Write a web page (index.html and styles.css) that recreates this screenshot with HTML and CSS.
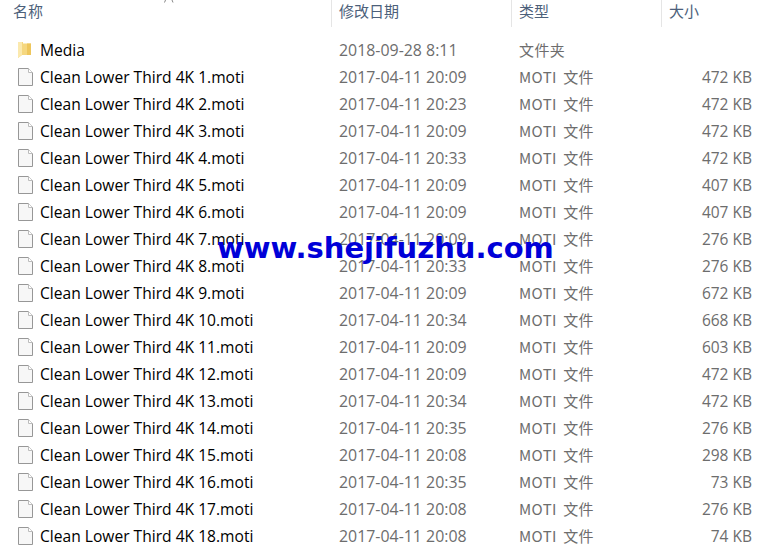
FILE: index.html
```html
<!DOCTYPE HTML>
<html>

<head>
  <meta charset="utf-8">
  <link rel="stylesheet" href="styles.css">
</head>

<body>

  <svg class="defs" width="0" height="0">
    <symbol id="file" viewBox="0 0 15 18">
      <path d="M.5 .5H10.5L14.5 4.5V17.5H.5Z" fill="#f7f7f7" stroke="#979797"/>
      <path d="M10.5 .5V4.5H14.5" fill="#fff" stroke="#bcbcbc"/>
    </symbol>
    <symbol id="folder" viewBox="0 0 13 18">
      <path d="M0 1H5V2.5H13V14H4L0 17Z" fill="#f5d77f"/>
      <path d="M0 1H4V14L0 17Z" fill="#fbe9ae"/>
      <path d="M9 2.5H13V14H9Z" fill="#eec65c"/>
    </symbol>
  </svg>

  <!-- bottom of a line cut off by the top edge -->
  <svg class="cutoff" width="10" height="3" viewBox="0 0 10 3">
    <path d="M1.5 0L.5 2.5M8 0L9 2.5" fill="none" stroke="#888"/>
  </svg>

  <div class="list">

    <div class="head">
      <div class="cell name-head">名称</div>
      <div class="cell">修改日期</div>
      <div class="cell">类型</div>
      <div class="cell">大小</div>
    </div>

    <div class="rows">
      <div class="row"><div class="name"><svg class="folder"><use href="#folder"/></svg>Media</div><div class="date">2018-09-28 8:11</div><div class="type">文件夹</div><div class="size"></div></div>
      <div class="row"><div class="name"><svg class="file"><use href="#file"/></svg>Clean Lower Third 4K 1.moti</div><div class="date">2017-04-11 20:09</div><div class="type">MOTI 文件</div><div class="size">472 KB</div></div>
      <div class="row"><div class="name"><svg class="file"><use href="#file"/></svg>Clean Lower Third 4K 2.moti</div><div class="date">2017-04-11 20:23</div><div class="type">MOTI 文件</div><div class="size">472 KB</div></div>
      <div class="row"><div class="name"><svg class="file"><use href="#file"/></svg>Clean Lower Third 4K 3.moti</div><div class="date">2017-04-11 20:09</div><div class="type">MOTI 文件</div><div class="size">472 KB</div></div>
      <div class="row"><div class="name"><svg class="file"><use href="#file"/></svg>Clean Lower Third 4K 4.moti</div><div class="date">2017-04-11 20:33</div><div class="type">MOTI 文件</div><div class="size">472 KB</div></div>
      <div class="row"><div class="name"><svg class="file"><use href="#file"/></svg>Clean Lower Third 4K 5.moti</div><div class="date">2017-04-11 20:09</div><div class="type">MOTI 文件</div><div class="size">407 KB</div></div>
      <div class="row"><div class="name"><svg class="file"><use href="#file"/></svg>Clean Lower Third 4K 6.moti</div><div class="date">2017-04-11 20:09</div><div class="type">MOTI 文件</div><div class="size">407 KB</div></div>
      <div class="row"><div class="name"><svg class="file"><use href="#file"/></svg>Clean Lower Third 4K 7.moti</div><div class="date">2017-04-11 20:09</div><div class="type">MOTI 文件</div><div class="size">276 KB</div></div>
      <div class="row"><div class="name"><svg class="file"><use href="#file"/></svg>Clean Lower Third 4K 8.moti</div><div class="date">2017-04-11 20:33</div><div class="type">MOTI 文件</div><div class="size">276 KB</div></div>
      <div class="row"><div class="name"><svg class="file"><use href="#file"/></svg>Clean Lower Third 4K 9.moti</div><div class="date">2017-04-11 20:09</div><div class="type">MOTI 文件</div><div class="size">672 KB</div></div>
      <div class="row"><div class="name"><svg class="file"><use href="#file"/></svg>Clean Lower Third 4K 10.moti</div><div class="date">2017-04-11 20:34</div><div class="type">MOTI 文件</div><div class="size">668 KB</div></div>
      <div class="row"><div class="name"><svg class="file"><use href="#file"/></svg>Clean Lower Third 4K 11.moti</div><div class="date">2017-04-11 20:09</div><div class="type">MOTI 文件</div><div class="size">603 KB</div></div>
      <div class="row"><div class="name"><svg class="file"><use href="#file"/></svg>Clean Lower Third 4K 12.moti</div><div class="date">2017-04-11 20:09</div><div class="type">MOTI 文件</div><div class="size">472 KB</div></div>
      <div class="row"><div class="name"><svg class="file"><use href="#file"/></svg>Clean Lower Third 4K 13.moti</div><div class="date">2017-04-11 20:34</div><div class="type">MOTI 文件</div><div class="size">472 KB</div></div>
      <div class="row"><div class="name"><svg class="file"><use href="#file"/></svg>Clean Lower Third 4K 14.moti</div><div class="date">2017-04-11 20:35</div><div class="type">MOTI 文件</div><div class="size">276 KB</div></div>
      <div class="row"><div class="name"><svg class="file"><use href="#file"/></svg>Clean Lower Third 4K 15.moti</div><div class="date">2017-04-11 20:08</div><div class="type">MOTI 文件</div><div class="size">298 KB</div></div>
      <div class="row"><div class="name"><svg class="file"><use href="#file"/></svg>Clean Lower Third 4K 16.moti</div><div class="date">2017-04-11 20:35</div><div class="type">MOTI 文件</div><div class="size">73 KB</div></div>
      <div class="row"><div class="name"><svg class="file"><use href="#file"/></svg>Clean Lower Third 4K 17.moti</div><div class="date">2017-04-11 20:08</div><div class="type">MOTI 文件</div><div class="size">276 KB</div></div>
      <div class="row"><div class="name"><svg class="file"><use href="#file"/></svg>Clean Lower Third 4K 18.moti</div><div class="date">2017-04-11 20:08</div><div class="type">MOTI 文件</div><div class="size">74 KB</div></div>
    </div>

  </div>

  <div class="watermark">www.shejifuzhu.com</div>

</body>
</html>
```

FILE: styles.css
```css
html, body {
  margin: 0;
  height: 100%;
  overflow: hidden;
  background: #fff;
}

body {
  position: relative;
  font-family: "Open Sans", "Noto Sans CJK SC", sans-serif;
  font-size: 15px;
}

.defs {
  display: block;
}

.cutoff {
  position: absolute;
  left: 164px;
  top: 0;
}

.list {
  width: 767px;
}

.head, .row {
  display: grid;
  grid-template-columns: 331px 180px 150px 100px 6px;
}

.head {
  height: 27px;
  color: #4c607a;
}

.cell {
  height: 27px;
  line-height: 23px;
  padding-left: 7px;
  border-left: 1px solid #e5e5e5;
  box-sizing: border-box;
}

.name-head {
  padding-left: 13px;
  border-left: none;
}

.rows {
  padding-top: 10px;
}

.row {
  height: 27px;
  line-height: 26px;
  color: #6d6d6d;
}

.name {
  display: flex;
  align-items: center;
  box-sizing: border-box;
  padding: 0 0 1px 18px;
  color: #000;
  font-size: 15.6px;
}

.file {
  width: 15px;
  height: 18px;
  margin-right: 7px;
}

.folder {
  width: 13px;
  height: 18px;
  margin-right: 9px;
}

.date {
  padding-left: 8px;
  font-size: 15.9px;
}

.type {
  padding-left: 8px;
  font-family: "Noto Sans CJK SC", sans-serif;
  letter-spacing: .4px;
  word-spacing: 2.5px;
}

.size {
  text-align: right;
  padding-right: 9px;
  font-size: 15.5px;
  line-height: 27px;
}

.watermark {
  position: absolute;
  left: 217px;
  top: 228px;
  font-family: "DejaVu Sans", sans-serif;
  font-weight: bold;
  font-size: 29px;
  line-height: 40px;
  color: #0000d8;
}
```
